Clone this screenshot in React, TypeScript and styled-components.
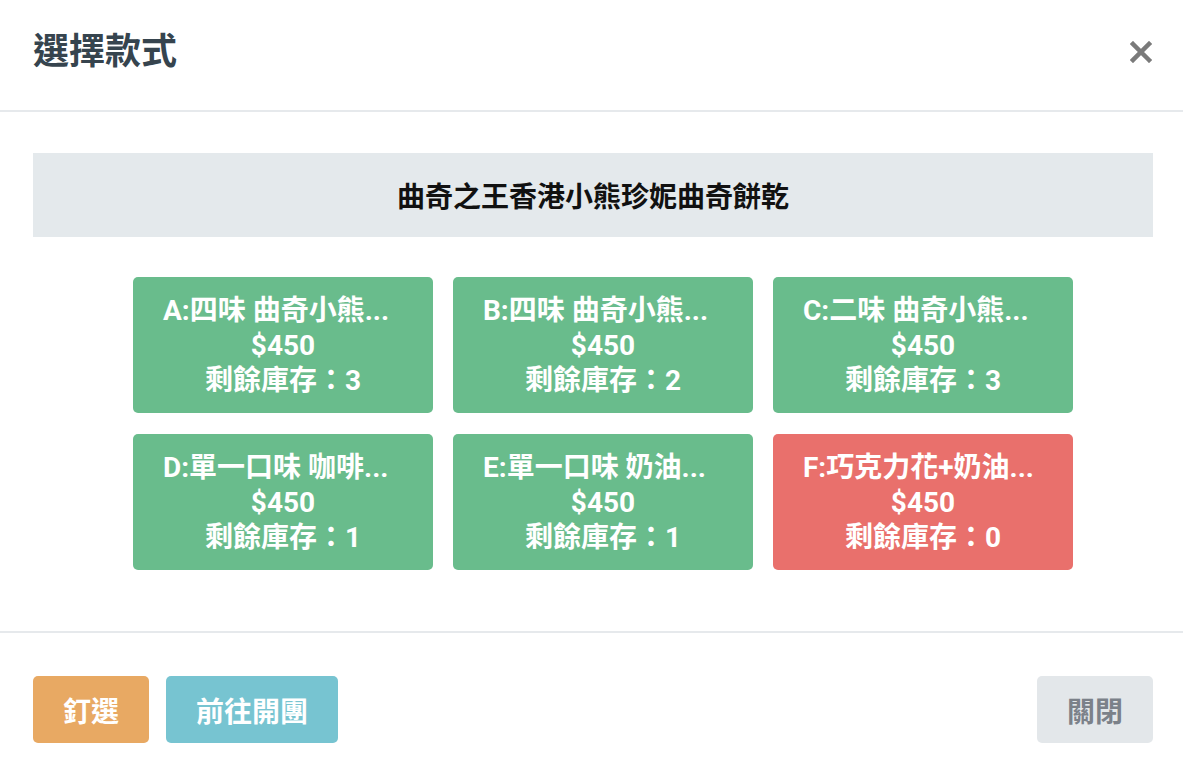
import React from "react";
import styled, { createGlobalStyle } from "styled-components";

const GlobalStyle = createGlobalStyle`
  * {
    box-sizing: border-box;
  }
  body {
    margin: 0;
    background: #ffffff;
    font-family: "Roboto", "Noto Sans CJK TC", sans-serif;
  }
`;

const Modal = styled.div`
  width: 1183px;
  min-height: 775px;
  background: #ffffff;
  display: flex;
  flex-direction: column;
`;

const Header = styled.div`
  display: flex;
  align-items: center;
  justify-content: space-between;
  height: 112px;
  padding: 0 30px 6px 33px;
  border-bottom: 2px solid #e6e9ec;
`;

const Title = styled.h5`
  margin: 0;
  font-size: 36px;
  font-weight: 700;
  line-height: 1.3;
  color: #36444e;
`;

const CloseButton = styled.button`
  display: flex;
  align-items: center;
  justify-content: center;
  width: 24px;
  height: 24px;
  padding: 0;
  border: none;
  background: transparent;
  cursor: pointer;
`;

const Body = styled.div`
  padding: 41px 30px 61px 33px;
  border-bottom: 2px solid #e6e9ec;
`;

const ProductBar = styled.div`
  display: flex;
  align-items: center;
  justify-content: center;
  height: 84px;
  background: #e4e9ec;
  font-size: 28px;
  font-weight: 700;
  color: #111111;
`;

const Grid = styled.div`
  display: grid;
  grid-template-columns: repeat(3, 300px);
  column-gap: 20px;
  row-gap: 21px;
  justify-content: center;
  margin-top: 40px;
  padding-left: 20px;
`;

const Card = styled.div<{ $soldOut?: boolean }>`
  height: 136px;
  padding: 16px 30px;
  border-radius: 5px;
  background: ${(p) => (p.$soldOut ? "#e9706c" : "#69bc8c")};
  color: #ffffff;
  font-size: 28px;
  font-weight: 700;
  line-height: 35px;
  text-align: center;
  cursor: pointer;
`;

const CardName = styled.div`
  white-space: nowrap;
  text-align: left;
`;

const Footer = styled.div`
  display: flex;
  align-items: center;
  padding: 43px 30px 33px 33px;
  gap: 17px;
`;

const Spacer = styled.div`
  flex: 1;
`;

const Button = styled.button<{ $bg: string; $fg: string }>`
  height: 67px;
  padding: 0 30px;
  border: none;
  border-radius: 5px;
  background: ${(p) => p.$bg};
  color: ${(p) => p.$fg};
  font-family: "Roboto", "Noto Sans CJK TC", sans-serif;
  font-size: 28px;
  font-weight: 700;
  cursor: pointer;
`;

const items = [
  { name: "A:四味 曲奇小熊...", stock: 3 },
  { name: "B:四味 曲奇小熊...", stock: 2 },
  { name: "C:二味 曲奇小熊...", stock: 3 },
  { name: "D:單一口味 咖啡...", stock: 1 },
  { name: "E:單一口味 奶油...", stock: 1 },
  { name: "F:巧克力花+奶油...", stock: 0 },
];

export default function App() {
  return (
    <>
      <GlobalStyle />
      <Modal>
        <Header>
          <Title>選擇款式</Title>
          <CloseButton aria-label="close">
            <svg width="22" height="22" viewBox="0 0 22 22">
              <path
                d="M3 3 L19 19 M19 3 L3 19"
                stroke="#7a7a7a"
                strokeWidth="4.5"
                strokeLinecap="square"
              />
            </svg>
          </CloseButton>
        </Header>
        <Body>
          <ProductBar>曲奇之王香港小熊珍妮曲奇餅乾</ProductBar>
          <Grid>
            {items.map((item) => (
              <Card key={item.name} $soldOut={item.stock === 0}>
                <CardName>{item.name}</CardName>
                <div>$450</div>
                <div>剩餘庫存：{item.stock}</div>
              </Card>
            ))}
          </Grid>
        </Body>
        <Footer>
          <Button $bg="#e8a963" $fg="#ffffff">釘選</Button>
          <Button $bg="#77c4d1" $fg="#ffffff">前往開團</Button>
          <Spacer />
          <Button $bg="#e3e7ea" $fg="#7b8189">關閉</Button>
        </Footer>
      </Modal>
    </>
  );
}
